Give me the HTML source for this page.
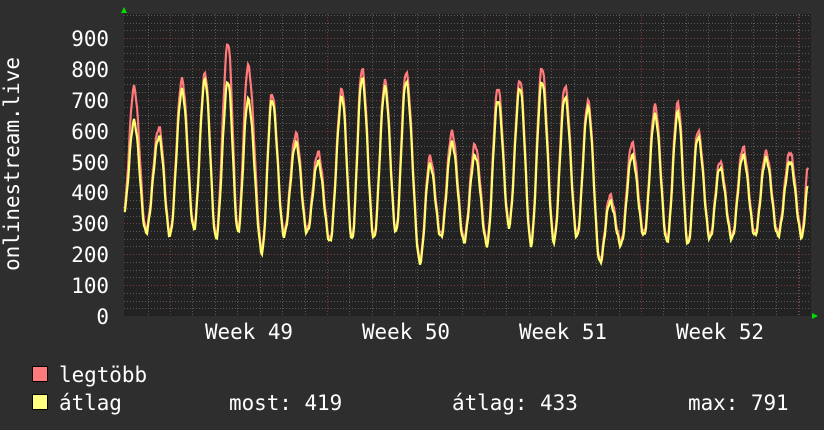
<!DOCTYPE html>
<html><head><meta charset="utf-8"><style>
html,body{margin:0;padding:0;background:#2e2e2e;}
body{width:824px;height:430px;overflow:hidden;position:relative;font-family:"DejaVu Sans Mono","Liberation Mono",monospace;color:#fff;}
svg{position:absolute;left:0;top:0}
</style></head><body>
<svg id="g" width="824" height="430" xmlns="http://www.w3.org/2000/svg" font-family="DejaVu Sans Mono, Liberation Mono, monospace" font-size="20.9" fill="#fff">
<rect x="124" y="14" width="687" height="302" fill="#222222"/>
<g id="grid"></g>
<polyline id="red" fill="none" stroke="#ff7a7a" stroke-width="2.2" stroke-linejoin="miter"/>
<polyline id="yel" fill="none" stroke="#ffff70" stroke-width="2.2" stroke-linejoin="miter"/>
<polygon points="121,13 124,7 127,13" fill="#00dd00"/>
<polygon points="812,313 818,316 812,319" fill="#00dd00"/>
<g text-anchor="end">
<text x="109" y="46">900</text><text x="109" y="77">800</text><text x="109" y="108">700</text>
<text x="109" y="139">600</text><text x="109" y="170">500</text><text x="109" y="200">400</text>
<text x="109" y="231">300</text><text x="109" y="262">200</text><text x="109" y="293">100</text>
<text x="109" y="324">0</text>
</g>
<g text-anchor="middle">
<text x="249" y="339">Week 49</text><text x="406" y="339">Week 50</text>
<text x="563" y="339">Week 51</text><text x="720" y="339">Week 52</text>
</g>
<text transform="translate(19,164) rotate(-90)" text-anchor="middle">onlinestream.live</text>
<rect x="32.5" y="366.5" width="15" height="15" fill="#ff7a7a" stroke="#000"/>
<rect x="32.5" y="394.5" width="15" height="15" fill="#ffff80" stroke="#000"/>
<text x="59" y="382">legtöbb</text>
<text x="59" y="410">átlag</text>
<text x="229" y="410">most: 419</text>
<text x="452" y="410">átlag: 433</text>
<text x="688" y="410">max: 791</text>
</svg>
<script>
(function(){
var ns="http://www.w3.org/2000/svg",g=document.getElementById("grid");
function ln(x1,y1,x2,y2,c,d){var l=document.createElementNS(ns,"line");l.setAttribute("x1",x1);l.setAttribute("y1",y1);l.setAttribute("x2",x2);l.setAttribute("y2",y2);l.setAttribute("stroke",c);l.setAttribute("stroke-width","1");l.setAttribute("stroke-dasharray",d);g.appendChild(l);}
function Y(v){return 316-v*0.3089;}
for(var v=25;v<=975;v+=25){var y=Math.round(Y(v))+0.5;if(y<14)break;ln(124,y,811,y,v%100==0?"#7a3a3a":"#5a5a5a","1,2");}
for(var x=147.5;x<811;x+=22.43){var xx=Math.round(x)+0.5;ln(xx,14,xx,316,"#5a5a5a","1,2");}
[170,327,484,641,799].forEach(function(x){ln(x+0.5,14,x+0.5,316,"#7a3a3a","1,2");});
var P=[[134,740,630],[159,610,580],[182,765,730],[205,785,765],[228,885,760],[248,810,700],[272,720,700],[296,590,560],[318,530,500],[342,735,710],[362,800,770],[385,760,740],[406,790,760],[430,515,490],[452,595,560],[475,555,520],[498,740,700],[520,765,740],[542,805,760],[565,745,710],[588,695,675],[610,390,370],[632,560,520],[655,680,650],[678,690,660],[698,600,580],[720,500,480],[743,545,520],[766,530,510],[790,530,500]];
var T=[[124,340],[146,270],[170,260],[194,280],[216,250],[238,270],[262,205],[284,260],[307,270],[330,240],[352,245],[374,250],[396,270],[420,172],[441,255],[464,240],[487,230],[509,290],[531,230],[554,240],[577,255],[600,172],[621,230],[644,260],[667,240],[688,230],[710,250],[732,250],[755,260],[778,260],[802,255],[810,470]];
function build(idx,off){var pts=[];var K=[];for(var i=0;i<P.length;i++){K.push([T[i][0],T[i][1]+off]);K.push([P[i][0],P[i][idx]]);}K.push([T[30][0],T[30][1]+off]);K.push([808,idx==1?480:420]);
for(var j=0;j<K.length-1;j++){var a=K[j],b=K[j+1];for(var x=a[0];x<b[0];x++){var t=(x-a[0])/(b[0]-a[0]);var s=(1-Math.cos(Math.PI*t))/2;var v=a[1]+(b[1]-a[1])*s+Math.sin(x*1.7)*8;pts.push(x+","+Y(v).toFixed(1));}}
pts.push(K[K.length-1][0]+","+Y(K[K.length-1][1]).toFixed(1));return pts.join(" ");}
document.getElementById("red").setAttribute("points",build(1,10));
document.getElementById("yel").setAttribute("points",build(2,0));
})();
</script>
</body></html>
